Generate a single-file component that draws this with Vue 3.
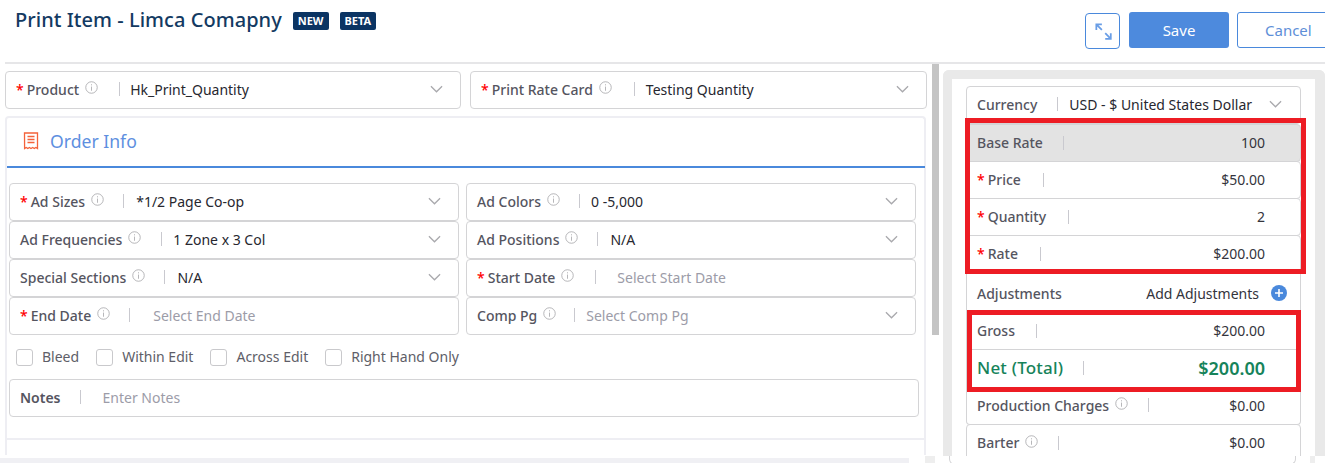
<script setup>
const topFields = [
  { label: 'Product', req: true, info: true, value: 'Hk_Print_Quantity', gap: 21, after: 10, select: true },
  { label: 'Print Rate Card', req: true, info: true, value: 'Testing Quantity', gap: 22, after: 11, select: true }
]
const orderFields = [
  { label: 'Ad Sizes', req: true, info: true, value: '*1/2 Page Co-op', gap: 19, after: 12, select: true },
  { label: 'Ad Colors', info: true, value: '0 -5,000', gap: 19, after: 11, select: true },
  { label: 'Ad Frequencies', info: true, value: '1 Zone x 3 Col', gap: 20, after: 11, select: true },
  { label: 'Ad Positions', info: true, value: 'N/A', gap: 19, after: 12, select: true },
  { label: 'Special Sections', info: true, value: 'N/A', gap: 19, after: 12, select: true },
  { label: 'Start Date', req: true, info: true, value: 'Select Start Date', gap: 21, after: 21, ph: true },
  { label: 'End Date', req: true, info: true, value: 'Select End Date', gap: 19, after: 23, ph: true },
  { label: 'Comp Pg', info: true, value: 'Select Comp Pg', gap: 18, after: 11, ph: true, select: true }
]
const checks = ['Bleed', 'Within Edit', 'Across Edit', 'Right Hand Only']
const rates = [
  { label: 'Base Rate', value: '100', gap: 20, shade: true },
  { label: 'Price', req: true, value: '$50.00', gap: 22 },
  { label: 'Quantity', req: true, value: '2', gap: 22 },
  { label: 'Rate', req: true, value: '$200.00', gap: 22 }
]
</script>

<template>
  <div class="page">
    <header class="head">
      <div class="title-wrap">
        <h1 class="title">Print Item - Limca Comapny</h1>
        <span class="tag tag-new">NEW</span>
        <span class="tag">BETA</span>
      </div>
      <div class="actions">
        <button class="btn-icon" aria-label="Expand">
          <svg width="20" height="20" viewBox="0 0 18 18" fill="none" stroke="#6a9ee6" stroke-width="1.6">
            <path d="M3 3l5 5M3 8V3h5M11 11l5 5M11 16h5v-5" />
          </svg>
        </button>
        <button class="btn-save">Save</button>
        <button class="btn-cancel">Cancel</button>
      </div>
    </header>

    <main class="body">
      <section class="left">
        <div class="top-row">
          <div v-for="f in topFields" :key="f.label" class="field">
            <span class="label"><i v-if="f.req" class="req">*</i>{{ f.label }}</span>
            <svg v-if="f.info" class="info" viewBox="0 0 14 14"><circle cx="7" cy="7" r="6.2" /><path d="M7 6v4.5M7 3.5v1.2" /></svg>
            <span class="sep" :style="{ marginLeft: f.gap + 'px', marginRight: f.after + 'px' }"></span>
            <span class="value">{{ f.value }}</span>
            <svg class="chev" viewBox="0 0 14 8"><path d="M1 1l6 6 6-6" /></svg>
          </div>
        </div>

        <div class="card">
          <div class="card-head">
            <svg class="receipt" viewBox="0 0 16 18" fill="none" stroke="#f4623a" stroke-width="1.3">
              <path d="M1.5 1h13v15.5l-1.6-1-1.6 1-1.6-1-1.7 1-1.6-1-1.6 1-1.6-1-1.6 1z" />
              <path d="M4.5 4.5h7M4.5 7.5h7M4.5 10.5h7" />
            </svg>
            <span class="card-title">Order Info</span>
          </div>
          <div class="grid">
            <div v-for="f in orderFields" :key="f.label" class="field tight">
              <span class="label"><i v-if="f.req" class="req">*</i>{{ f.label }}</span>
              <svg v-if="f.info" class="info" viewBox="0 0 14 14"><circle cx="7" cy="7" r="6.2" /><path d="M7 6v4.5M7 3.5v1.2" /></svg>
              <span class="sep" :style="{ marginLeft: f.gap + 'px', marginRight: f.after + 'px' }"></span>
              <span class="value" :class="{ ph: f.ph }">{{ f.value }}</span>
              <svg v-if="f.select" class="chev" viewBox="0 0 14 8"><path d="M1 1l6 6 6-6" /></svg>
            </div>
          </div>
          <div class="checks">
            <label v-for="c in checks" :key="c" class="check"><span class="box"></span>{{ c }}</label>
          </div>
          <div class="field notes">
            <span class="label strong">Notes</span>
            <span class="sep notes-sep"></span>
            <span class="value ph">Enter Notes</span>
          </div>
          <div class="card-rule"></div>
        </div>
      </section>

      <div class="scroll"><div class="thumb"></div></div>

      <aside class="right">
        <div class="panel">
          <div class="stack">
            <div class="row currency">
              <span class="label">Currency</span>
              <span class="sep sep-cur"></span>
              <span class="value">USD - $ United States Dollar</span>
              <svg class="chev chev-cur" viewBox="0 0 14 8"><path d="M1 1l6 6 6-6" /></svg>
            </div>
            <div v-for="r in rates" :key="r.label" class="row rate" :class="{ shade: r.shade }">
              <span class="label"><i v-if="r.req" class="req">*</i>{{ r.label }}</span>
              <span class="sep" :style="{ marginLeft: r.gap + 'px' }"></span>
              <span class="amount">{{ r.value }}</span>
            </div>
            <div class="row adj">
              <span class="label">Adjustments</span>
              <span class="add">Add Adjustments</span>
              <svg class="plus" viewBox="0 0 16 16"><circle cx="8" cy="8" r="8" fill="#4a89dc" /><path d="M8 4v8M4 8h8" stroke="#fff" stroke-width="1.6" /></svg>
            </div>
            <div class="row plain gross">
              <span class="label">Gross</span>
              <span class="sep sep-gross"></span>
              <span class="amount">$200.00</span>
            </div>
            <div class="row plain net">
              <span class="label">Net (Total)</span>
              <span class="sep sep-net"></span>
              <span class="amount">$200.00</span>
            </div>
            <div class="row plain prod">
              <span class="label">Production Charges</span>
              <svg class="info" viewBox="0 0 14 14"><circle cx="7" cy="7" r="6.2" /><path d="M7 6v4.5M7 3.5v1.2" /></svg>
              <span class="sep sep-prod"></span>
              <span class="amount">$0.00</span>
            </div>
            <div class="row barter">
              <span class="label">Barter</span>
              <svg class="info" viewBox="0 0 14 14"><circle cx="7" cy="7" r="6.2" /><path d="M7 6v4.5M7 3.5v1.2" /></svg>
              <span class="sep sep-prod"></span>
              <span class="amount">$0.00</span>
            </div>
          </div>
        </div>
      </aside>
    </main>

    <footer class="foot">
      <div class="foot-band"></div>
      <div class="foot-block"></div>
      <div class="foot-box"></div>
      <div class="foot-edge"></div>
    </footer>

    <div class="mark mark-a"></div>
    <div class="mark mark-b"></div>
  </div>
</template>

<style>
html, body { margin: 0; background: #fff; }
</style>

<style scoped>
* { box-sizing: border-box; }
.page { position: relative; width: 1325px; height: 463px; overflow: hidden; background: #fff; font-family: "Noto Sans", "Open Sans", sans-serif; font-size: 14px; color: #34343c; }
.head { height: 64px; margin-left: 5px; display: flex; justify-content: space-between; border-bottom: 2px solid #e6e6e8; }
.title-wrap { display: flex; align-items: flex-start; padding: 6px 0 0 10px; }
.title { margin: 0; font-size: 20px; line-height: 27px; font-weight: 500; color: #133a62; letter-spacing: 0.04px; }
.tag { margin: 6px 0 0 11px; height: 18px; padding: 0 5px; border-radius: 2px; background: #0b3463; color: #fff; font-size: 11px; font-weight: 700; line-height: 18px; }
.tag-new { margin-left: 11px; }
.actions { display: flex; align-items: flex-start; padding-top: 12px; }
.btn-icon { width: 35px; height: 36px; padding: 0; margin-top: 1px; background: #fff; border: 1px solid #4a89dc; border-radius: 4px; display: flex; align-items: center; justify-content: center; }
.btn-save { width: 100px; height: 36px; margin-left: 9px; background: #4d8add; color: #fff; border: 0; border-radius: 3px; font: 15px "Noto Sans", sans-serif; }
.btn-cancel { width: 100px; height: 36px; margin: 0 -12px 0 8px; background: #fff; color: #5e8fd8; border: 1px solid #4a89dc; border-radius: 3px; font: 15px "Noto Sans", sans-serif; text-align: left; padding: 0 0 0 27px; }

.body { display: flex; height: 392px; overflow: hidden; }
.left { width: 927px; padding: 7px 0 0 5px; flex: none; }
.top-row { display: grid; grid-template-columns: 456px 457px; column-gap: 9px; width: 922px; }
.field { height: 38px; display: flex; align-items: center; padding: 0 17px 2px 10px; background: #fff; border: 1px solid #d4d4d6; border-radius: 4px; min-width: 0; }
.label { color: #55555f; font-weight: 500; white-space: nowrap; }
.strong { font-weight: 600; }
.req { font-style: normal; color: #f00; margin-right: 3px; }
.info { width: 13px; height: 13px; margin: -3px 0 0 6px; flex: none; fill: none; stroke: #a8a8ac; stroke-width: 0.9; }
.sep { width: 1px; height: 14px; background: #c9c9cf; flex: none; margin-right: 10px; }
.value { color: #27272f; white-space: nowrap; }
.value.ph { color: #9c9ca8; }
.chev { width: 13px; height: 8px; margin-left: auto; flex: none; fill: none; stroke: #a9a9ad; stroke-width: 1.4; }

.card { width: 921px; height: 339px; margin-top: 7px; border: 2px solid #eeeef3; border-bottom-width: 0; border-radius: 4px 4px 0 0; }
.card-head { height: 50px; display: flex; align-items: center; padding: 0 0 3px 16px; border-bottom: 2px solid #4a89dc; margin-right: -1px; }
.receipt { width: 16px; height: 18px; margin-right: 11px; }
.card-title { font-size: 17.6px; color: #5e8fe0; }
.grid { display: grid; grid-template-columns: 450px 450px; column-gap: 7px; padding: 15px 0 0 2px; }
.checks { display: flex; align-items: center; gap: 17px; padding: 0 0 0 9px; height: 44px; }
.check { display: flex; align-items: center; color: #5e5e68; padding-bottom: 2px; }
.box { width: 17px; height: 17px; margin: 2px 9px 0 0; background: #fff; border: 1px solid #c9c9cc; border-radius: 3px; }
.notes { width: 910px; margin: 0 0 0 2px; }
.notes-sep { margin-left: 19px; margin-right: 22px; }
.card-rule { height: 2px; background: #eeeef3; margin-top: 21px; }

.scroll { width: 16px; flex: none; padding-left: 5px; background: #fff; }
.thumb { width: 7px; height: 271px; background: #c4c4c4; }

.right { flex: 1; padding: 6px 0 0 0; min-width: 0; overflow: hidden; }
.panel { width: 382px; height: 400px; padding: 7px 10px 0 9px; border-radius: 6px 6px 0 0; background: #fff; border: solid #e9e9e9; border-width: 9px 10px 0 9px; }
.stack { width: 335px; margin-left: 5px; }
.row { height: 38px; display: flex; align-items: center; padding: 0 35px 1px 10px; background: #fff; border: 1px solid #d4d4d6; border-radius: 4px; }
.rate { margin-top: -1px; }
.rate.shade { margin-top: 0; }
.shade { background: #e3e3e3; }
.amount { margin-left: auto; color: #34343c; }
.currency { padding-right: 21px; padding-bottom: 2px; }
.sep-cur { margin-left: 20px; margin-right: 11px; }
.chev-cur { margin-left: 17px; }
.plain { border-width: 0 1px; border-radius: 0; }
.adj { margin-top: -1px; height: 39px; border-width: 0 1px; border-radius: 0; padding: 3px 13px 0 10px; }
.add { margin-left: auto; color: #34343c; }
.plus { width: 16px; height: 16px; margin-left: 12px; }
.gross { padding-bottom: 0; padding-top: 1px; }
.sep-gross { margin-left: 21px; }
.net { border-top: 1px solid #d4d4d6; padding-bottom: 2px; }
.net .label { color: #16835a; font-size: 17px; letter-spacing: 0.2px; }
.net .sep { margin-left: 20px; }
.net .amount { color: #16835a; font-size: 18px; font-weight: 600; }
.prod { border-bottom: 1px solid #d4d4d6; border-radius: 0 0 4px 4px; }
.sep-prod { margin-left: 20px; }
.barter { margin-top: -1px; }

.foot { height: 7px; position: relative; background: #fff; display: flex; align-items: flex-end; }
.foot-band { width: 909px; height: 5px; background: #f0f0f4; }
.foot-block { width: 10px; height: 7px; margin-left: 16px; background: #eeeeee; }
.foot-box { width: 347px; height: 9px; margin: 0 0 -2px 14px; border: 1px solid #d4d4d6; border-top: 0; border-radius: 0 0 6px 6px; }
.foot-edge { width: 5px; height: 7px; margin-left: 14px; background: #eeeeee; }
.mark { position: absolute; border: 5px solid #ed1c24; pointer-events: none; }
.mark-a { left: 965px; top: 118px; width: 341px; height: 156px; }
.mark-b { left: 967px; top: 310px; width: 334px; height: 82px; }
</style>
